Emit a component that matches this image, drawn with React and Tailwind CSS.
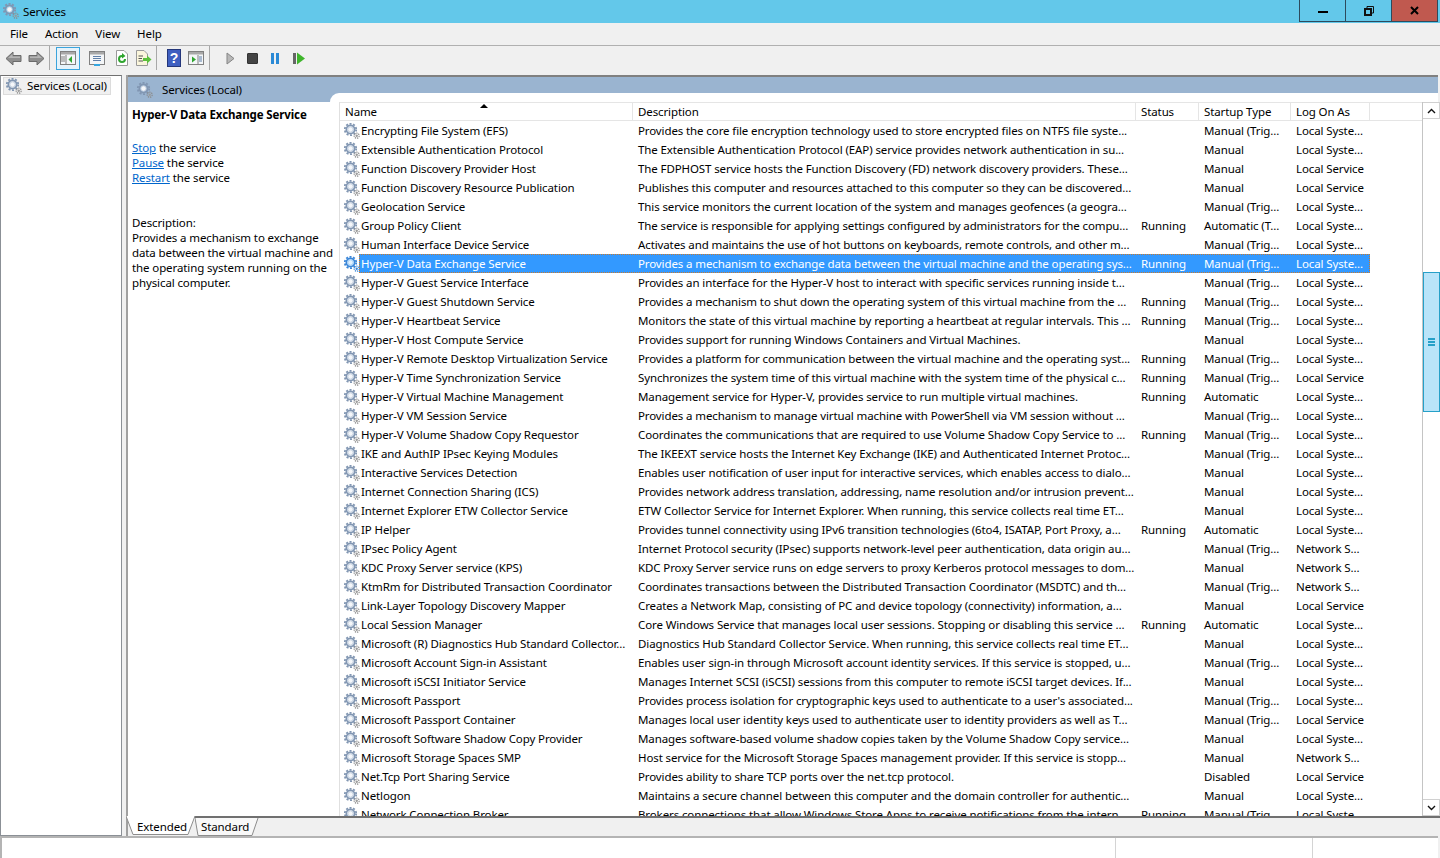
import React from "react";

const M = "Manual";
const MT = "Manual (Trig...";
const A = "Automatic";
const LS = "Local Syste...";
const LV = "Local Service";
const NS = "Network S...";
const R = "Running";

const services = [
  ["Encrypting File System (EFS)", "Provides the core file encryption technology used to store encrypted files on NTFS file syste...", "", MT, LS],
  ["Extensible Authentication Protocol", "The Extensible Authentication Protocol (EAP) service provides network authentication in su...", "", M, LS],
  ["Function Discovery Provider Host", "The FDPHOST service hosts the Function Discovery (FD) network discovery providers. These...", "", M, LV],
  ["Function Discovery Resource Publication", "Publishes this computer and resources attached to this computer so they can be discovered...", "", M, LV],
  ["Geolocation Service", "This service monitors the current location of the system and manages geofences (a geogra...", "", MT, LS],
  ["Group Policy Client", "The service is responsible for applying settings configured by administrators for the compu...", R, "Automatic (T...", LS],
  ["Human Interface Device Service", "Activates and maintains the use of hot buttons on keyboards, remote controls, and other m...", "", MT, LS],
  ["Hyper-V Data Exchange Service", "Provides a mechanism to exchange data between the virtual machine and the operating sys...", R, MT, LS],
  ["Hyper-V Guest Service Interface", "Provides an interface for the Hyper-V host to interact with specific services running inside t...", "", MT, LS],
  ["Hyper-V Guest Shutdown Service", "Provides a mechanism to shut down the operating system of this virtual machine from the ...", R, MT, LS],
  ["Hyper-V Heartbeat Service", "Monitors the state of this virtual machine by reporting a heartbeat at regular intervals. This ...", R, MT, LS],
  ["Hyper-V Host Compute Service", "Provides support for running Windows Containers and Virtual Machines.", "", M, LS],
  ["Hyper-V Remote Desktop Virtualization Service", "Provides a platform for communication between the virtual machine and the operating syst...", R, MT, LS],
  ["Hyper-V Time Synchronization Service", "Synchronizes the system time of this virtual machine with the system time of the physical c...", R, MT, LV],
  ["Hyper-V Virtual Machine Management", "Management service for Hyper-V, provides service to run multiple virtual machines.", R, A, LS],
  ["Hyper-V VM Session Service", "Provides a mechanism to manage virtual machine with PowerShell via VM session without ...", "", MT, LS],
  ["Hyper-V Volume Shadow Copy Requestor", "Coordinates the communications that are required to use Volume Shadow Copy Service to ...", R, MT, LS],
  ["IKE and AuthIP IPsec Keying Modules", "The IKEEXT service hosts the Internet Key Exchange (IKE) and Authenticated Internet Protoc...", "", MT, LS],
  ["Interactive Services Detection", "Enables user notification of user input for interactive services, which enables access to dialo...", "", M, LS],
  ["Internet Connection Sharing (ICS)", "Provides network address translation, addressing, name resolution and/or intrusion prevent...", "", M, LS],
  ["Internet Explorer ETW Collector Service", "ETW Collector Service for Internet Explorer. When running, this service collects real time ET...", "", M, LS],
  ["IP Helper", "Provides tunnel connectivity using IPv6 transition technologies (6to4, ISATAP, Port Proxy, a...", R, A, LS],
  ["IPsec Policy Agent", "Internet Protocol security (IPsec) supports network-level peer authentication, data origin au...", "", MT, NS],
  ["KDC Proxy Server service (KPS)", "KDC Proxy Server service runs on edge servers to proxy Kerberos protocol messages to dom...", "", M, NS],
  ["KtmRm for Distributed Transaction Coordinator", "Coordinates transactions between the Distributed Transaction Coordinator (MSDTC) and th...", "", MT, NS],
  ["Link-Layer Topology Discovery Mapper", "Creates a Network Map, consisting of PC and device topology (connectivity) information, a...", "", M, LV],
  ["Local Session Manager", "Core Windows Service that manages local user sessions. Stopping or disabling this service ...", R, A, LS],
  ["Microsoft (R) Diagnostics Hub Standard Collector...", "Diagnostics Hub Standard Collector Service. When running, this service collects real time ET...", "", M, LS],
  ["Microsoft Account Sign-in Assistant", "Enables user sign-in through Microsoft account identity services. If this service is stopped, u...", "", MT, LS],
  ["Microsoft iSCSI Initiator Service", "Manages Internet SCSI (iSCSI) sessions from this computer to remote iSCSI target devices. If...", "", M, LS],
  ["Microsoft Passport", "Provides process isolation for cryptographic keys used to authenticate to a user's associated...", "", MT, LS],
  ["Microsoft Passport Container", "Manages local user identity keys used to authenticate user to identity providers as well as T...", "", MT, LV],
  ["Microsoft Software Shadow Copy Provider", "Manages software-based volume shadow copies taken by the Volume Shadow Copy service...", "", M, LS],
  ["Microsoft Storage Spaces SMP", "Host service for the Microsoft Storage Spaces management provider. If this service is stopp...", "", M, NS],
  ["Net.Tcp Port Sharing Service", "Provides ability to share TCP ports over the net.tcp protocol.", "", "Disabled", LV],
  ["Netlogon", "Maintains a secure channel between this computer and the domain controller for authentic...", "", M, LS],
  ["Network Connection Broker", "Brokers connections that allow Windows Store Apps to receive notifications from the intern...", R, MT, LS],
];

function Gear({ selected }) {
  const dark = selected ? "#3a86d8" : "#8196b2";
  const light = selected ? "#8cc4f5" : "#b4c4d8";
  return (
    <svg width="16" height="16" viewBox="0 0 16 16" className="shrink-0">
      <circle cx="6.5" cy="6.5" r="5.7" fill="none" stroke={dark} strokeWidth="1.8" strokeDasharray="2 1.6" />
      <circle cx="6.5" cy="6.5" r="4.1" fill="none" stroke={dark} strokeWidth="1.8" />
      <circle cx="6.5" cy="6.5" r="2.7" fill={selected ? "#e2f1ff" : "#f5f7fa"} stroke={light} strokeWidth="0.8" />
      <circle cx="12.7" cy="12.7" r="2.5" fill="none" stroke={selected ? "#3a86d8" : "#8a8a8a"} strokeWidth="1.2" strokeDasharray="1.3 0.9" />
      <circle cx="12.7" cy="12.7" r="1.2" fill={selected ? "#3a86d8" : "#9a9a9a"} />
    </svg>
  );
}

function ArrowIcon({ flip }) {
  return (
    <svg width="17" height="15" viewBox="0 0 17 15" className={flip ? "-scale-x-100" : ""}>
      <path d="M1 7.5 L8 1 V4.5 H16 V10.5 H8 V14 Z" fill="#8f8f8f" stroke="#6b6b6b" strokeWidth="1" />
      <path d="M3 7 L7.5 3 V5.5 H15 V7 Z" fill="#b5b5b5" />
    </svg>
  );
}

function WindowIcon({ children }) {
  return (
    <svg width="16" height="16" viewBox="0 0 16 16">
      <rect x="0.5" y="1.5" width="15" height="13" fill="#f4f6f8" stroke="#808080" />
      <rect x="1" y="2" width="14" height="2.5" fill="#a8a8a8" />
      {children}
    </svg>
  );
}

function Toolbar() {
  return (
    <div className="h-[30px] flex items-center pl-[5px] pb-[5px] border-t border-[#b0b0b0]">
      <ArrowIcon />
      <div className="ml-[6px]"><ArrowIcon flip /></div>
      <div className="w-px h-[24px] bg-[#a8a8a8] ml-[4px]" />
      <div className="ml-[6px] w-[24px] h-[23px] border border-[#3ba4dc] bg-[#e6f3fb] flex items-center justify-center">
        <WindowIcon>
          <path d="M6 5 V14 M1 7 H5 M1 9 H5 M1 11 H5" stroke="#808080" strokeWidth="1" />
          <path d="M12 6 L8.5 9.5 L12 13 Z" fill="#2fa52f" />
        </WindowIcon>
      </div>
      <div className="ml-[9px]">
        <WindowIcon>
          <path d="M4 6.5 H12 M4 8.5 H12 M4 10.5 H12" stroke="#5f7fa8" strokeWidth="1" />
          <rect x="5" y="14" width="6" height="2" fill="#35a6e0" />
        </WindowIcon>
      </div>
      <svg width="16" height="16" viewBox="0 0 16 16" className="ml-[9px]">
        <path d="M2.5 0.5 H10 L13.5 4 V15.5 H2.5 Z" fill="#fff" stroke="#9a9a9a" />
        <path d="M12 9 A4 4 0 1 1 8 5 V3 L11.5 6 L8 8.5 V7 A2 2 0 1 0 10 9 Z" fill="#2ea52e" />
      </svg>
      <svg width="17" height="16" viewBox="0 0 17 16" className="ml-[5px]">
        <path d="M1.5 0.5 H9 L12.5 4 V15.5 H1.5 Z" fill="#fbf6dc" stroke="#9a9a9a" />
        <path d="M3.5 6 H8 M3.5 8.5 H7 M3.5 11 H8" stroke="#555" strokeWidth="1" />
        <path d="M8 8 H12 V5.5 L16.5 9.5 L12 13.5 V11 H8 Z" fill="#5cc13c" />
      </svg>
      <div className="w-px h-[24px] bg-[#a8a8a8] ml-[4px]" />
      <svg width="14" height="18" viewBox="0 0 14 18" className="ml-[10px]">
        <rect x="0.5" y="0.5" width="13" height="17" fill="#3f5fc0" stroke="#24367a" />
        <text x="7" y="14" textAnchor="middle" fontSize="14" fontWeight="700" fontFamily="Liberation Sans" fill="#fff">?</text>
      </svg>
      <div className="ml-[7px]">
        <WindowIcon>
          <path d="M10 5 V14" stroke="#808080" strokeWidth="1" />
          <path d="M11 7 H14 M11 9 H14 M11 11 H14" stroke="#5f7fa8" strokeWidth="1" />
          <path d="M4 6.5 L8 9.5 L4 12.5 Z" fill="#2fa52f" />
        </WindowIcon>
      </div>
      <div className="w-px h-[24px] bg-[#a8a8a8] ml-[5px]" />
      <svg width="9" height="13" viewBox="0 0 9 13" className="ml-[16px]">
        <path d="M1 1 L8 6.5 L1 12 Z" fill="#b8b8b8" stroke="#858585" />
      </svg>
      <div className="ml-[12px] w-[11px] h-[11px] rounded-[1px] bg-[#444] border border-[#333]" />
      <div className="ml-[13px] flex gap-[2px]">
        <div className="w-[3px] h-[11px] bg-[#2b8ad6]" />
        <div className="w-[3px] h-[11px] bg-[#2b8ad6]" />
      </div>
      <div className="ml-[14px] flex items-center gap-[1px]">
        <div className="w-[3px] h-[11px] bg-[#666]" />
        <svg width="8" height="13" viewBox="0 0 8 13">
          <path d="M0 0.5 L8 6.5 L0 12.5 Z" fill="#3fb52c" />
        </svg>
      </div>
    </div>
  );
}

function Row({ row, selected }) {
  const [name, desc, status, startup, logon] = row;
  const cell = "px-[6px] overflow-hidden whitespace-nowrap";
  return (
    <div className="h-[19px] flex items-center shrink-0 w-[1030px]">
      <div className="w-[19px] pl-[4px] shrink-0"><Gear selected={selected} /></div>
      <div className={"flex-1 flex items-center h-[19px] " + (selected ? "bg-[#3399ff] text-white border border-dotted border-[#c97a2c] -mx-0" : "")}>
        <div className={(selected ? "w-[272px] pl-[1px]" : "w-[273px] pl-[2px]") + " overflow-hidden whitespace-nowrap"}>{name}</div>
        <div className={"w-[503px] " + cell}>{desc}</div>
        <div className={"w-[63px] " + cell}>{status}</div>
        <div className={"w-[92px] " + cell}>{startup}</div>
        <div className={(selected ? "w-[78px]" : "w-[79px]") + " " + cell}>{logon}</div>
      </div>
    </div>
  );
}

function Scrollbar() {
  return (
    <div className="w-[18px] flex flex-col border-l border-[#c4c4c4] bg-white">
      <div className="h-[17px] border border-[#d0d0d0] border-l-0 flex items-center justify-center">
        <svg width="9" height="6" viewBox="0 0 9 6"><path d="M1 5 L4.5 1.5 L8 5" fill="none" stroke="#111" strokeWidth="1.4" /></svg>
      </div>
      <div className="h-[153px]" />
      <div className="h-[140px] w-[17px] border border-[#26a0c8] bg-[#b9e4f9] flex flex-col items-center justify-center gap-[1px]">
        <div className="w-[7px] h-[2px] bg-[#26a0c8]" />
        <div className="w-[7px] h-[2px] bg-[#26a0c8]" />
        <div className="w-[7px] h-[2px] bg-[#26a0c8]" />
      </div>
      <div className="flex-1" />
      <div className="h-[17px] border border-[#d0d0d0] border-l-0 flex items-center justify-center">
        <svg width="9" height="6" viewBox="0 0 9 6"><path d="M1 1 L4.5 4.5 L8 1" fill="none" stroke="#111" strokeWidth="1.4" /></svg>
      </div>
    </div>
  );
}

function Tabs() {
  return (
    <div className="h-[20px] flex items-stretch border-t-2 border-[#707070] relative">
      <div className="w-[70px] h-[20px] -mt-[2px] -ml-[2px] relative shrink-0">
        <svg width="70" height="20" viewBox="0 0 70 20" className="absolute left-0 top-0">
          <path d="M0 0 L7 18.5 H62 L69 0 Z" fill="#fff" />
          <path d="M0 0 L7 18.5 H62 L69 0" fill="none" stroke="#8c8c8c" />
        </svg>
        <span className="absolute left-[11px] top-[2px] leading-[18px]">Extended</span>
      </div>
      <div className="w-[64px] h-[18px] -ml-[1px] relative shrink-0">
        <svg width="64" height="18" viewBox="0 0 64 18" className="absolute left-0 top-0">
          <path d="M0 0 L3 17.5 H57 L63 0 Z" fill="#f8f8f8" />
          <path d="M0 0 L3 17.5 H57 L63 0" fill="none" stroke="#8c8c8c" />
        </svg>
        <span className="absolute left-[6px] top-0 leading-[18px]">Standard</span>
      </div>
    </div>
  );
}

export default function App() {
  return (
    <div className="w-[1440px] h-[858px] overflow-hidden flex flex-col bg-[#f0f0f0] text-black text-[11.5px] tracking-[-0.11px] font-['Noto_Sans',sans-serif]">
      {/* title bar */}
      <div className="h-[23px] bg-[#63c8ea] flex items-start shrink-0">
        <div className="pl-[3px] pt-[3px]"><Gear /></div>
        <span className="ml-[4px] mt-[3px] leading-[17px]">Services</span>
        <div className="ml-auto mr-[2px] flex h-[22px] border border-t-0 border-[#2d4a5c]">
          <div className="w-[46px] border-r border-[#2d4a5c] flex items-center justify-center">
            <div className="w-[10px] h-[2px] mt-[3px] bg-black" />
          </div>
          <div className="w-[46px] border-r border-[#2d4a5c] flex items-center justify-center">
            <svg width="10" height="10" viewBox="0 0 10 10"><path d="M3 2.5 V0.5 H9.5 V7 H7.5" fill="none" stroke="#111" /><rect x="1" y="3" width="6" height="6" fill="none" stroke="#111" strokeWidth="2" /></svg>
          </div>
          <div className="w-[45px] bg-[#c0594f] flex items-center justify-center">
            <svg width="9" height="9" viewBox="0 0 9 9"><path d="M1 1 L8 8 M8 1 L1 8" stroke="#000" strokeWidth="2" /></svg>
          </div>
        </div>
      </div>

      {/* menu */}
      <div className="h-[22px] flex items-center pl-[10px] gap-[17px] shrink-0">
        <span>File</span>
        <span>Action</span>
        <span>View</span>
        <span>Help</span>
      </div>

      <Toolbar />

      {/* panes */}
      <div className="h-[761px] flex shrink-0">
        <div className="w-[122px] border-l border-r border-t border-b border-[#8b9096] border-t-[#707070] bg-white pt-[1px] pl-[2px] shrink-0">
          <div className="w-[108px] h-[18px] bg-[#f0f0f0] border border-[#dcdcdc] flex items-center pl-[2px] gap-[5px]">
            <Gear />
            <span className="whitespace-nowrap">Services (Local)</span>
          </div>
        </div>
        <div className="w-[4px] shrink-0" />
        <div className="flex-1 flex flex-col min-w-0 border-l-2 border-[#a0a0a0]">
          <div className="h-[741px] flex flex-col border-t-2 border-[#808080] bg-white mr-[2px]">
            <div className="h-[25px] flex shrink-0 bg-[#9ab4d0]">
              <div className="w-[202px] flex items-center pl-[9px] gap-[9px]">
                <Gear />
                <span>Services (Local)</span>
              </div>
              <div className="flex-1 self-end h-[9px] bg-white rounded-tl-[9px]" />
            </div>
            <div className="flex flex-1 min-h-0 -mr-[2px]">
              <div className="w-[211px] shrink-0 pl-[4px] pt-[5px] leading-[15px]">
                <div className="font-bold whitespace-nowrap h-[15px]">Hyper-V Data Exchange Service</div>
                <div className="mt-[18px]"><span className="text-[#0066cc] underline">Stop</span> the service</div>
                <div><span className="text-[#0066cc] underline">Pause</span> the service</div>
                <div><span className="text-[#0066cc] underline">Restart</span> the service</div>
                <div className="mt-[30px]">Description:</div>
                <div className="w-[204px]">Provides a mechanism to exchange data between the virtual machine and the operating system running on the physical computer.</div>
              </div>
              <div className="flex-1 flex flex-col min-w-0 overflow-hidden border-l border-[#e0e0e0]">
                <div className="h-[19px] flex shrink-0 border-b border-[#e5e5e5] border-t items-center">
                  <div className="w-[293px] h-full flex items-center relative pl-[5px] pt-[1px] border-r border-[#e5e5e5]">
                    Name
                    <div className="absolute left-[140px] top-[1px] w-0 h-0 border-x-[4px] border-x-transparent border-b-[4px] border-b-black" />
                  </div>
                  <div className="w-[503px] h-full flex items-center pl-[5px] pt-[1px] border-r border-[#e5e5e5]">Description</div>
                  <div className="w-[63px] h-full flex items-center pl-[5px] pt-[1px] border-r border-[#e5e5e5]">Status</div>
                  <div className="w-[92px] h-full flex items-center pl-[5px] pt-[1px] border-r border-[#e5e5e5]">Startup Type</div>
                  <div className="w-[79px] h-full flex items-center pl-[5px] pt-[1px] border-r border-[#e5e5e5]">Log On As</div>
                </div>
                <div className="flex-1 flex flex-col overflow-hidden">
                  {services.map((s, i) => (
                    <Row key={s[0]} row={s} selected={i === 7} />
                  ))}
                </div>
              </div>
              <Scrollbar />
            </div>
          </div>
          <Tabs />
        </div>
      </div>

      {/* status bar */}
      <div className="flex-1 flex bg-white border-t-2 border-l-2 border-[#b4b4b4] mr-[2px]">
        <div className="w-[1114px] border-r border-[#d4d4d4]" />
        <div className="w-[197px] border-r border-[#d4d4d4]" />
      </div>
    </div>
  );
}
